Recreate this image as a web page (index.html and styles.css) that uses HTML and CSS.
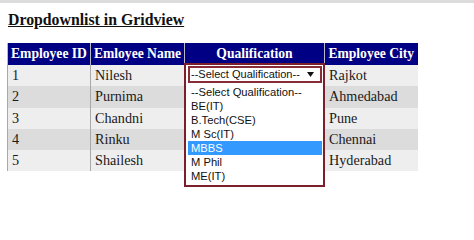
FILE: index.html
```html
<!DOCTYPE html>
<html>
<head>
<meta charset="utf-8">
<link rel="stylesheet" href="styles.css">
</head>
<body>
<div class="strip"></div>
<div class="page">
  <h2 class="title">Dropdownlist in Gridview</h2>
  <div class="gridwrap">
    <table class="grid">
      <colgroup>
        <col class="c1"><col class="c2"><col class="c3"><col class="c4">
      </colgroup>
      <thead>
        <tr><th>Employee ID</th><th>Emloyee Name</th><th>Qualification</th><th>Employee City</th></tr>
      </thead>
      <tbody>
        <tr class="light"><td>1</td><td>Nilesh</td><td></td><td>Rajkot</td></tr>
        <tr class="dark"><td>2</td><td>Purnima</td><td></td><td>Ahmedabad</td></tr>
        <tr class="light"><td>3</td><td>Chandni</td><td></td><td>Pune</td></tr>
        <tr class="dark"><td>4</td><td>Rinku</td><td></td><td>Chennai</td></tr>
        <tr class="light"><td>5</td><td>Shailesh</td><td></td><td>Hyderabad</td></tr>
      </tbody>
    </table>
    <div class="dd">
      <div class="sel">
        <span class="seltext">--Select Qualification--</span>
        <svg class="arrow" width="7" height="5" viewBox="0 0 7 5"><path d="M0 0H7L3.5 5Z" fill="#111"/></svg>
      </div>
      <ul class="list">
        <li>--Select Qualification--</li>
        <li>BE(IT)</li>
        <li>B.Tech(CSE)</li>
        <li>M Sc(IT)</li>
        <li class="hl">MBBS</li>
        <li>M Phil</li>
        <li>ME(IT)</li>
      </ul>
    </div>
  </div>
</div>
</body>
</html>
```

FILE: styles.css
```css
html, body {
  margin: 0;
  padding: 0;
  background: #ffffff;
}
html {
  height: 100%;
}
body {
  min-height: 203px;
  font-family: "Liberation Serif", "Times New Roman", serif;
  color: #1a1a1a;
}
.strip {
  height: 3px;
  background: #dcdcdc;
}
.page {
  padding: 8px 0 0 7px;
  min-height: 192px;
}
.title {
  margin: 0 0 14px 1px;
  font-size: 15.8px;
  line-height: 18px;
  font-weight: bold;
  text-decoration: underline;
  color: #111;
}
.gridwrap {
  position: relative;
  width: 410px;
}
.grid {
  border-collapse: collapse;
  table-layout: fixed;
  width: 410px;
  border-left: 1px solid #a8a8a8;
}
.c1 { width: 83px; }
.c2 { width: 94px; }
.c3 { width: 140px; }
.c4 { width: 93px; }
.grid th {
  background: #000084;
  color: #ffffff;
  font-size: 13.6px;
  font-weight: bold;
  height: 22px;
  padding: 0 2px;
  text-align: center;
  border-left: 1px solid #b8b8c8;
  white-space: nowrap;
}
.grid td {
  font-size: 14.2px;
  height: 21.3px;
  padding: 0 4px;
  border-left: 1px solid #a8a8a8;
  white-space: nowrap;
}
.light td { background: #eeeeee; }
.dark td { background: #dcdcdc; }
.dd {
  position: absolute;
  z-index: 2;
  top: 20px;
  left: 177px;
  width: 137px;
  height: 120px;
  border: 2px solid #7c1f2c;
  background: #ffffff;
  font-family: "Liberation Sans", Arial, sans-serif;
  font-size: 11px;
  color: #111;
}
.sel {
  margin: 1px 1px 0 2px;
  height: 13px;
  border: 2px solid #8a2b38;
  display: flex;
  align-items: center;
  justify-content: space-between;
  padding: 0 6px 0 1px;
  background: #ffffff;
  line-height: 13px;
}
.arrow {
  display: block;
}
.list {
  list-style: none;
  margin: 1px 1px 0 2px;
  padding: 1px 0 0 0;
}
.list li {
  height: 14px;
  line-height: 14px;
  padding-left: 3px;
  font-size: 11.2px;
}
.list li.hl {
  background: #3399ff;
  color: #ffffff;
}
```
